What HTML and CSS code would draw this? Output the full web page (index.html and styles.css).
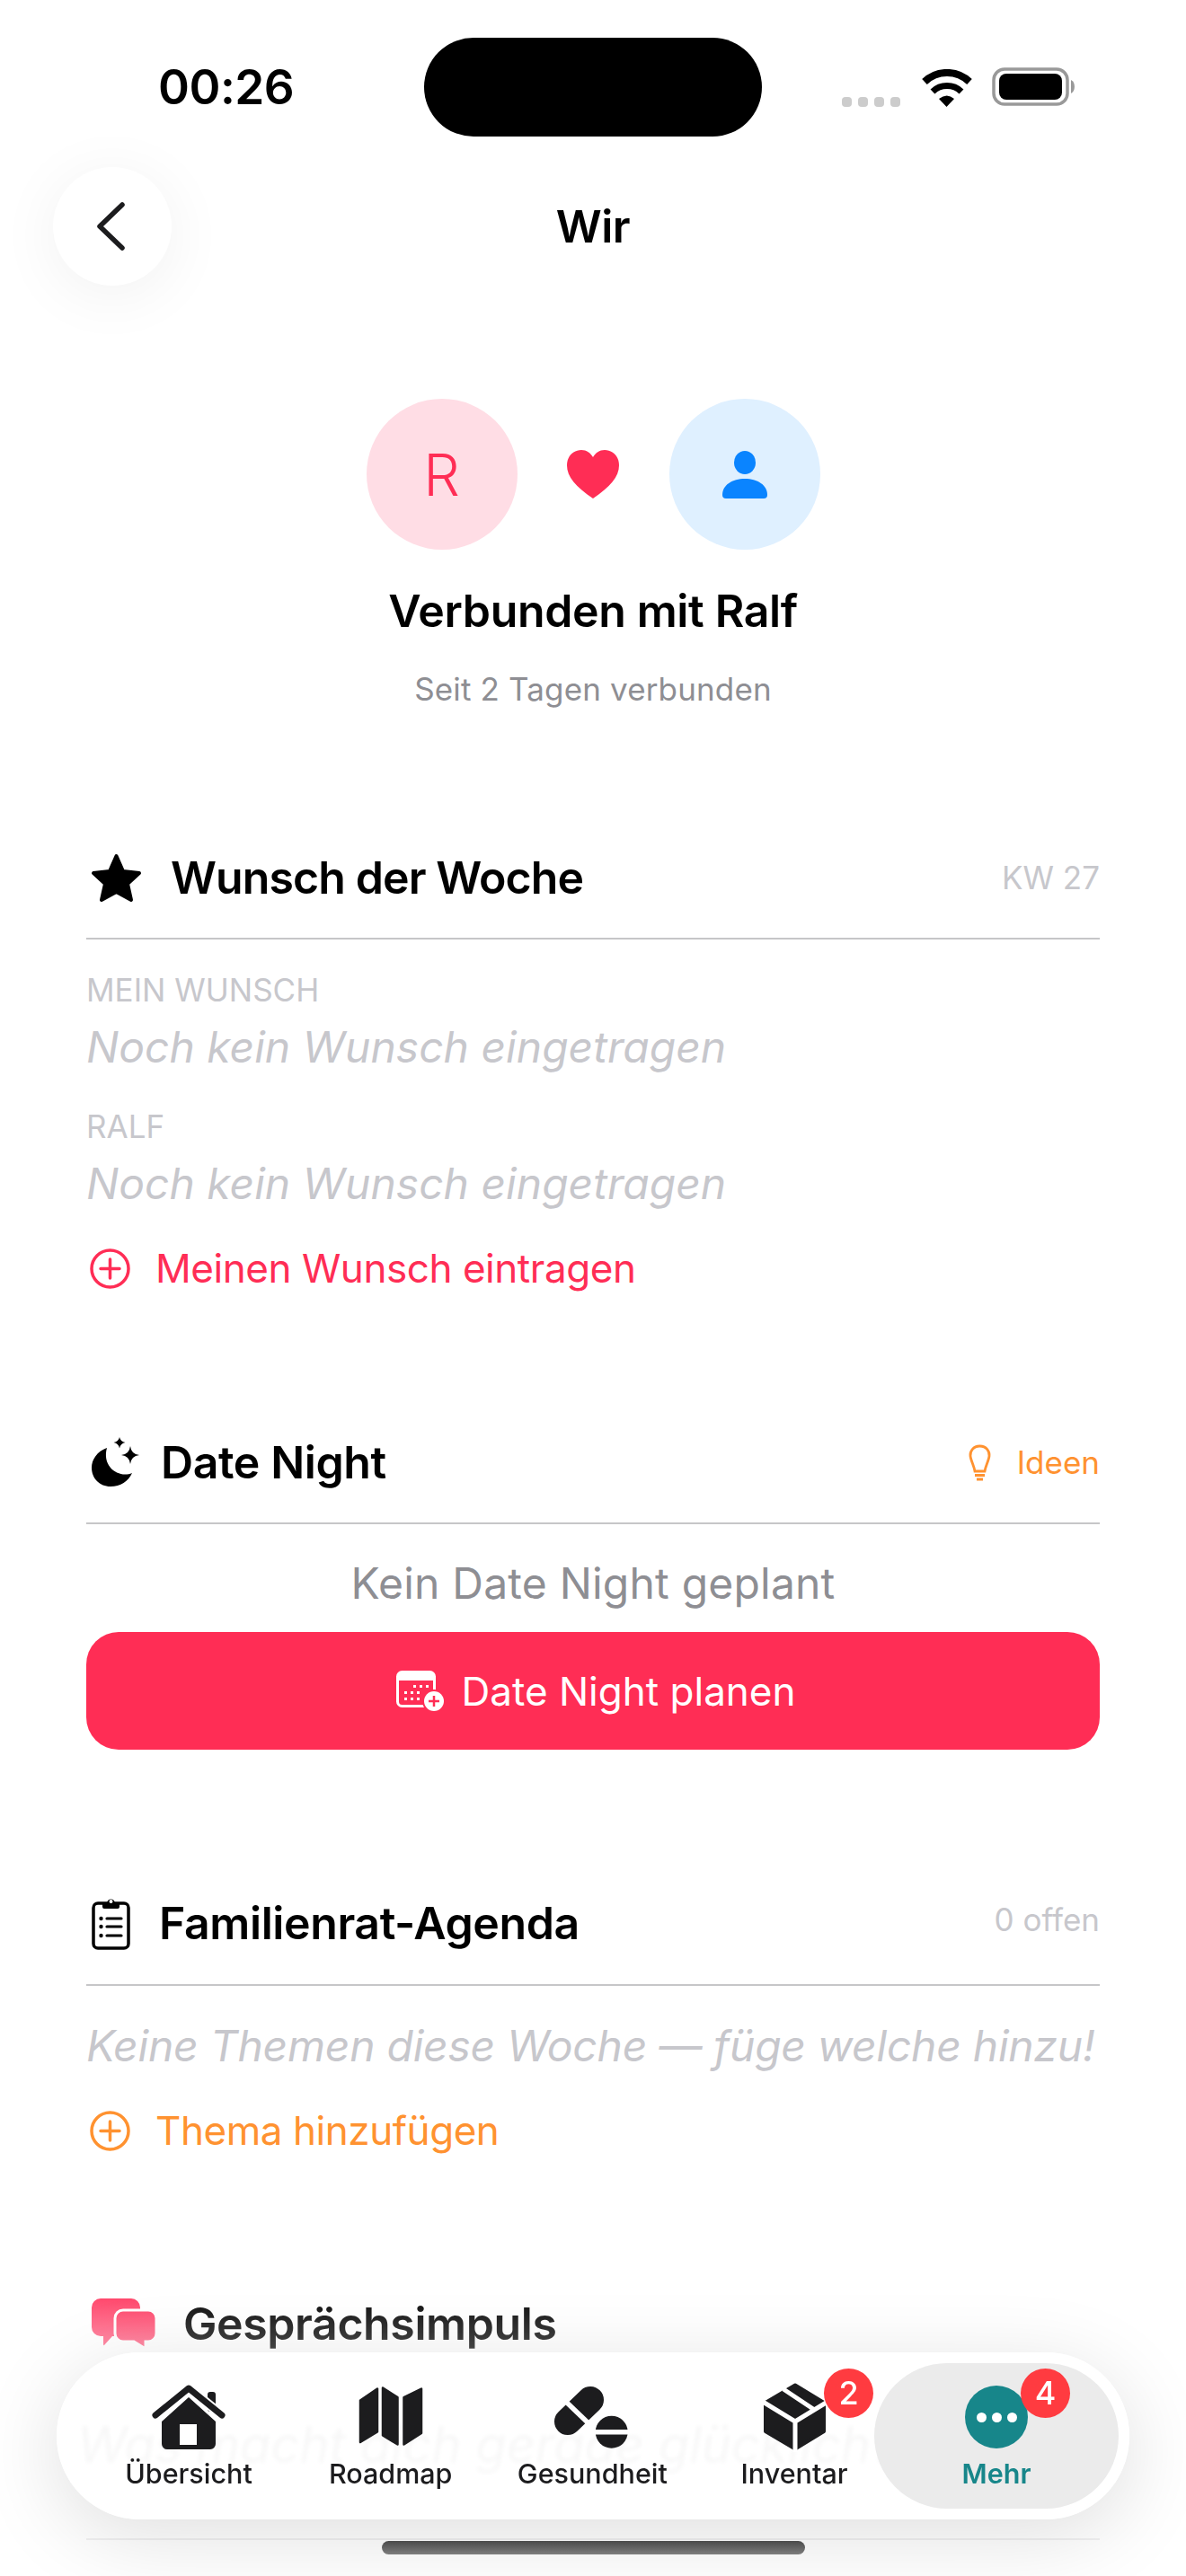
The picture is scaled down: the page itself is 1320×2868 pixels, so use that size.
FILE: index.html
```html
<!DOCTYPE html>
<html lang="de">
<head>
<meta charset="utf-8">
<title>Wir</title>
<link rel="stylesheet" href="styles.css">
</head>
<body>
<div class="screen">
  <div class="status">
    <span class="time">00:26</span>
    <div class="island"></div>
    <div class="status-icons">
      <div class="signal"><i></i><i></i><i></i><i></i></div>
      <svg class="wifi" width="58" height="42" viewBox="0 0 58 42"><path d="M4 14A36 36 0 0 1 54 14" fill="none" stroke="#000" stroke-width="8"/><path d="M13 25A23 23 0 0 1 45 25" fill="none" stroke="#000" stroke-width="7"/><path d="M20 33Q29 26 37 33L28.500 42Z" fill="#000"/></svg>
      <svg class="battery" width="94" height="44" viewBox="0 0 94 44"><rect x="2" y="2" width="82" height="39" rx="12" fill="none" stroke="#999" stroke-width="3.500"/><rect x="8" y="7" width="70" height="29" rx="8" fill="#000"/><path d="M88 14a6 8 0 0 1 0 15Z" fill="#999"/></svg>
    </div>
  </div>

  <header class="topbar">
    <button class="back"><svg width="34" height="56" viewBox="0 0 34 56"><path d="M30 4L5 28L30 52" fill="none" stroke="#1c1c1e" stroke-width="5.500" stroke-linecap="round" stroke-linejoin="round"/></svg></button>
    <h1 class="page-title">Wir</h1>
    <div class="top-spacer"></div>
  </header>

  <section class="hero">
    <div class="avatars">
      <div class="avatar avatar-pink">R</div>
      <svg width="58" height="54" viewBox="0 0 58 54"><path d="M29 54C10 41 0 30 0 17C0 7 7 0 16 0C22 0 26 3 29 8C32 3 36 0 42 0C51 0 58 7 58 17C58 30 48 41 29 54Z" fill="#ff2d55"/></svg>
      <div class="avatar avatar-blue"><svg width="50" height="53" viewBox="0 0 50 53"><ellipse cx="25" cy="13" rx="12" ry="13" fill="#0a84ff"/><path d="M0 49C0 38 11 31 25 31C39 31 50 38 50 49a4 4 0 0 1-4 4H4a4 4 0 0 1-4-4Z" fill="#0a84ff"/></svg></div>
    </div>
    <h2 class="hero-title">Verbunden mit Ralf</h2>
    <p class="hero-sub">Seit 2 Tagen verbunden</p>
  </section>

  <main class="content">
    <section class="card card-wish">
      <div class="card-head">
        <div class="head-left gap-star">
          <svg class="ic-star" width="57" height="55" viewBox="0 0 57 55"><path d="M28.500 3L36 20L54 22L41 34L45 52L28.500 43L12 52L16 34L3 22L21 20Z" fill="#000" stroke="#000" stroke-width="4" stroke-linejoin="round"/></svg>
          <h3 class="card-title">Wunsch der Woche</h3>
        </div>
        <span class="meta">KW 27</span>
      </div>
      <div class="label label-first">MEIN WUNSCH</div>
      <p class="empty empty-tight">Noch kein Wunsch eingetragen</p>
      <div class="label label-next">RALF</div>
      <p class="empty empty-tight">Noch kein Wunsch eingetragen</p>
      <div class="action action-pink">
        <svg width="45" height="45" viewBox="0 0 45 45"><circle cx="22.500" cy="22.500" r="20.500" fill="none" stroke="currentColor" stroke-width="3.500"/><path d="M22.500 12V33M12 22.500H33" stroke="currentColor" stroke-width="3.500" stroke-linecap="round"/></svg>
        <span>Meinen Wunsch eintragen</span>
      </div>
    </section>

    <section class="card card-date">
      <div class="card-head">
        <div class="head-left gap-moon">
          <svg class="ic-moon" width="53" height="56" viewBox="11 8 53 56"><path d="M28 20C17 24 11 33 11 42C11 54 20 63 32 63C43 63 52 57 56 48C42 54 22 42 28 20Z" fill="#000"/><path d="M54 18Q55 27 64 28Q55 29 54 38Q53 29 44 28Q53 27 54 18Z" fill="#000"/><path d="M42 8Q43 13 48.500 14Q43 15 42 20.500Q41 15 35.500 14Q41 13 42 8Z" fill="#000"/></svg>
          <h3 class="card-title">Date Night</h3>
        </div>
        <span class="meta meta-link">
          <svg width="25" height="41" viewBox="0 0 25 41"><path d="M12.500 2C5 2 1.500 8 2 13C2.500 18 6 24 7 30H18C19 24 22.500 18 23 13C23.500 8 20 2 12.500 2Z" fill="none" stroke="currentColor" stroke-width="2.800"/><path d="M7 34.500H18M9 39H16" stroke="currentColor" stroke-width="3"/></svg>
          <span>Ideen</span>
        </span>
      </div>
      <p class="date-empty">Kein Date Night geplant</p>
      <button class="primary">
        <svg width="53" height="45" viewBox="0 0 53 45"><rect x="1.500" y="1.500" width="41" height="38" rx="5" fill="none" stroke="#fff" stroke-width="3"/><path d="M1.500 6a4.500 4.500 0 0 1 4.500-4.500H38A4.500 4.500 0 0 1 42.500 6V11H1.500Z" fill="#fff"/><g fill="#fff"><rect x="19" y="16" width="3" height="3"/><rect x="26" y="16" width="3" height="3"/><rect x="33" y="16" width="3" height="3"/><rect x="9" y="23" width="3" height="3"/><rect x="16" y="23" width="3" height="3"/><rect x="23" y="23" width="3" height="3"/><rect x="9" y="30" width="3" height="3"/><rect x="16" y="30" width="3" height="3"/><rect x="23" y="30" width="3" height="3"/></g><circle cx="42" cy="34" r="13" fill="#ff2d55"/><circle cx="42" cy="34" r="11" fill="#fff"/><path d="M42 28V40M36 34H48" stroke="#ff2d55" stroke-width="2.500"/></svg>
        <span>Date Night planen</span>
      </button>
    </section>

    <section class="card card-agenda">
      <div class="card-head card-head-tall">
        <div class="head-left gap-clip">
          <svg class="ic-clip" width="43" height="60" viewBox="0 0 43 60"><rect x="2" y="8" width="39" height="50" rx="5" fill="none" stroke="#000" stroke-width="3.500"/><path d="M12 12V8h5a4.500 4.500 0 0 1 9 0h5v4Q31 14 29 14H14Q12 14 12 12Z" fill="#000"/><circle cx="21.500" cy="6" r="2" fill="#fff"/><path d="M17 25H33M17 34H33M17 44H33" stroke="#000" stroke-width="3.200" stroke-linecap="round"/><circle cx="10.500" cy="25" r="2.200"/><circle cx="10.500" cy="34" r="2.200"/><circle cx="10.500" cy="44" r="2.200"/></svg>
          <h3 class="card-title">Familienrat-Agenda</h3>
        </div>
        <span class="meta meta-up">0 offen</span>
      </div>
      <p class="empty empty-agenda">Keine Themen diese Woche — füge welche hinzu!</p>
      <div class="action action-orange">
        <svg width="45" height="45" viewBox="0 0 45 45"><circle cx="22.500" cy="22.500" r="20.500" fill="none" stroke="currentColor" stroke-width="3.500"/><path d="M22.500 12V33M12 22.500H33" stroke="currentColor" stroke-width="3.500" stroke-linecap="round"/></svg>
        <span>Thema hinzufügen</span>
      </div>
    </section>

    <section class="card card-talk">
      <div class="card-head card-head-plain">
        <div class="head-left gap-talk">
          <svg class="ic-talk" width="72" height="57" viewBox="0 0 72 57"><defs><linearGradient id="talk" x1="0" y1="0" x2="0" y2="1"><stop offset="0" stop-color="#ff3b62"/><stop offset="1" stop-color="#ff6285"/></linearGradient></defs><path d="M10 0H44a10 10 0 0 1 10 10V32a10 10 0 0 1-10 10H23L14 52Q13 53 13 50V42H10A10 10 0 0 1 0 32V10A10 10 0 0 1 10 0Z" fill="url(#talk)"/><path d="M35 13H63a9 9 0 0 1 9 9V39a9 9 0 0 1-9 9H60V56L47 48H35a9 9 0 0 1-9-9V22a9 9 0 0 1 9-9Z" fill="url(#talk)" stroke="#fff" stroke-width="3"/></svg>
          <h3 class="card-title">Gesprächsimpuls</h3>
        </div>
      </div>
      <p class="prompt">Was macht dich gerade glücklich?</p>
      <div class="rule"></div>
    </section>
  </main>

  <div class="fade"></div>

  <nav class="tabbar">
    <div class="tab-group">
      <div class="tab">
        <svg width="84" height="78" viewBox="0 -2 84 78"><path fill-rule="evenodd" d="M42 15L72 42V67a6 6 0 0 1-6 6H18a6 6 0 0 1-6-6V42ZM32 45V68H51V45Z" fill="#1c1c1e"/><rect x="63" y="9" width="9" height="22" rx="3" fill="#1c1c1e"/><path d="M5 35L42 5L79 35" fill="none" stroke="#fff" stroke-width="11"/><path d="M5 35L42 5L79 35" fill="none" stroke="#1c1c1e" stroke-width="7" stroke-linecap="round" stroke-linejoin="round"/></svg>
        <span>Übersicht</span>
      </div>
      <div class="tab">
        <svg width="72" height="78" viewBox="0 -4 72 78"><g fill="#1c1c1e" stroke="#1c1c1e" stroke-width="2.500" stroke-linejoin="round"><path d="M21 3.500V51.500L2 63V16.500Z"/><path d="M27 2.500L43.500 13V65.500L27 55.500Z"/><path d="M50.500 13L70 3.500V53L50.500 65.500Z"/></g></svg>
        <span>Roadmap</span>
      </div>
      <div class="tab">
        <svg width="92" height="78" viewBox="0 0 92 78"><path d="M19 44L44 20" stroke="#1c1c1e" stroke-width="30" stroke-linecap="round"/><path d="M18 23L42 46" stroke="#fff" stroke-width="5.500"/><circle cx="67.700" cy="55.700" r="18" fill="#1c1c1e"/><path d="M48 55.700H88" stroke="#fff" stroke-width="5.500"/></svg>
        <span>Gesundheit</span>
      </div>
      <div class="tab">
        <svg width="80" height="78" viewBox="0 0 80 78"><path d="M41 3.500L73 23V55L41 74.500L8 55V23Z" fill="#1c1c1e" stroke="#1c1c1e" stroke-width="4" stroke-linejoin="round"/><path d="M5 22L41 44L77 22M41 44V78M28 8L61 30" fill="none" stroke="#fff" stroke-width="5"/></svg>
        <span>Inventar</span>
        <b class="badge">2</b>
      </div>
    </div>
    <div class="tab tab-active">
      <div class="more"><i></i><i></i><i></i></div>
      <span>Mehr</span>
      <b class="badge badge-active">4</b>
    </div>
  </nav>
  <div class="home-bar"></div>
</div>
</body>
</html>
```

FILE: styles.css
```css
* { box-sizing: border-box; }
html, body { margin: 0; padding: 0; }
body { background: #fff; font-family: Inter, "Noto Sans", "Liberation Sans", sans-serif; color: #000; }
h1, h2, h3, p { margin: 0; font-weight: 600; }

.screen { position: relative; width: 1320px; height: 2868px; overflow: hidden; background: #fff; }

.status { height: 186px; padding: 42px 0 0 176px; display: flex; align-items: flex-start; }
.time { flex: none; width: 296px; margin-top: 30px; font-size: 53px; line-height: 50px; font-weight: 600; letter-spacing: -0.5px; }
.island { flex: none; width: 376px; height: 110px; border-radius: 55px; background: #000; }
.status-icons { flex: none; margin-left: 89px; margin-top: 33px; display: flex; align-items: flex-end; width: 262px; }
.signal { display: flex; gap: 7px; width: 88px; }
.signal i { display: block; width: 11px; height: 11px; border-radius: 4px; background: #ccc; }
.wifi { margin-right: 21px; }
.battery { display: block; }

.topbar { display: grid; grid-template-columns: 132px 1fr 132px; align-items: center; padding: 0 59px; height: 132px; }
.back { width: 132px; height: 132px; border: 0; padding: 0; border-radius: 50%; background: #fff; box-shadow: 0 10px 70px rgba(0, 0, 0, 0.06); display: flex; align-items: center; justify-content: center; }
.back svg { margin-right: 4px; }
.page-title { text-align: center; font-size: 50px; line-height: 60px; font-weight: 600; letter-spacing: -0.5px; }

.hero { margin-top: 126px; text-align: center; }
.avatars { display: flex; justify-content: center; align-items: center; gap: 55.5px; }
.avatar { width: 168px; height: 168px; border-radius: 50%; display: flex; align-items: center; justify-content: center; font-size: 64px; font-weight: 300; }
.avatar-pink { background: #ffdde5; color: #ff2d55; }
.avatar-blue { background: #dff0ff; }
.hero-title { margin-top: 38px; font-size: 50px; line-height: 60px; font-weight: 600; letter-spacing: -0.35px; }
.hero-sub { margin-top: 35px; font-size: 35px; line-height: 44px; font-weight: 400; color: #8e8e93; letter-spacing: 0.15px; }

.content { padding: 0 96px; }
.card-wish { margin-top: 138px; }
.card-date { margin-top: 136px; }
.card-agenda { margin-top: 143px; }
.card-talk { margin-top: 135px; }

.card-head { display: flex; align-items: center; justify-content: space-between; height: 119px; padding-bottom: 17px; border-bottom: 2px solid #c6c6c8; }
.card-head-tall { height: 120px; padding-bottom: 18px; }
.card-head-plain { border-bottom-color: transparent; }
.head-left { display: flex; align-items: center; }
.head-left svg { margin-left: 6px; display: block; }
.gap-star { gap: 32px; }
.gap-star svg { margin-left: 5px; }
.gap-moon { gap: 24px; }
.gap-clip { gap: 32px; }
.gap-talk { gap: 30px; }
.card-title { font-size: 50px; line-height: 60px; font-weight: 600; letter-spacing: -0.4px; }
.card-wish .card-title { letter-spacing: -0.9px; }
.meta { font-size: 35px; line-height: 44px; color: #c7c7cc; font-weight: 400; }
.meta-up { margin-top: -8px; }
.meta-link { display: flex; align-items: center; gap: 29px; color: #ff9230; }

.label { font-size: 35px; line-height: 40px; color: #c7c7cc; font-weight: 400; }
.label-first { margin-top: 36px; }
.label-next { margin-top: 38px; }
.empty { font-size: 48px; line-height: 60px; color: #c7c7cc; font-weight: 400; font-style: italic; }
.empty-tight { margin-top: 14px; }
.empty-agenda { margin-top: 37px; white-space: nowrap; letter-spacing: -0.25px; }

.action { display: flex; align-items: center; gap: 28px; height: 60px; font-size: 44px; letter-spacing: -0.45px; font-weight: 400; padding-left: 4px; }
.action-pink { margin-top: 34px; color: #ff2d55; }
.action-orange { margin-top: 34px; color: #ff9230; }

.date-empty { margin-top: 36px; text-align: center; font-size: 48px; line-height: 60px; font-weight: 400; color: #8e8e93; letter-spacing: 0.2px; }
.primary { margin-top: 24px; width: 100%; height: 131px; border: 0; border-radius: 36px; padding: 0 0 0 6px; background: #ff2d55; color: #fff; display: flex; align-items: center; justify-content: center; gap: 20px; font-family: inherit; font-size: 44px; font-weight: 400; }

.prompt { margin-top: 36px; margin-left: -10px; font-size: 56px; line-height: 60px; font-weight: 400; font-style: italic; color: #1c1c1e; white-space: nowrap; }
.rule { margin-top: 74px; height: 2px; background: #c6c6c8; }

.fade { position: absolute; left: 0; right: 0; top: 2540px; bottom: 0; background: linear-gradient(rgba(255, 255, 255, 0), rgba(255, 255, 255, 0.3) 25%, rgba(255, 255, 255, 0.85)); }

.tabbar { position: absolute; left: 63px; top: 2619px; width: 1194px; height: 186px; padding: 12px 12px 12px 57px; border-radius: 93px; background: rgba(255, 255, 255, 0.93); box-shadow: 0 18px 90px rgba(0, 0, 0, 0.13); display: flex; backdrop-filter: blur(2px); }
.tab-group { display: flex; gap: 44.7px; }
.tab { position: relative; width: 180px; padding-top: 21px; display: flex; flex-direction: column; align-items: center; font-size: 30.5px; line-height: 36px; font-weight: 500; color: #1c1c1e; white-space: nowrap; }
.tab svg { display: block; }
.tab span { margin-top: 6px; }
.badge { position: absolute; left: 123px; top: 6px; width: 55px; height: 55px; border-radius: 50%; background: #ff3b40; color: #fff; font-size: 36px; line-height: 55px; text-align: center; font-weight: 500; }
.tab-active { width: 272px; height: 162px; margin-left: -1px; border-radius: 81px; background: #ebebeb; color: #17868a; font-weight: 600; }
.badge-active { left: 163px; }
.more { width: 70px; height: 70px; margin-top: 4px; margin-bottom: 4px; border-radius: 50%; background: #17868a; display: flex; align-items: center; justify-content: center; gap: 6px; }
.more i { display: block; width: 11px; height: 11px; border-radius: 50%; background: #fff; }

.home-bar { position: absolute; left: 425px; top: 2829px; width: 471px; height: 15px; border-radius: 8px; background: linear-gradient(#4a4a4a, #7d7d7d); }
```
